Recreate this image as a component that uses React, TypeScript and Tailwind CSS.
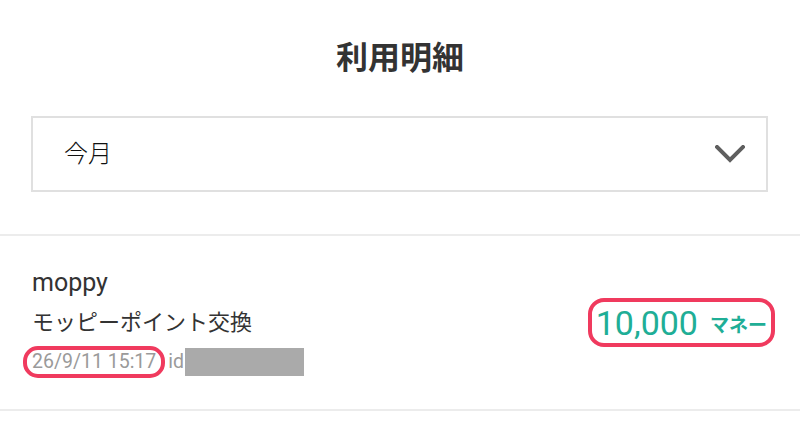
function ChevronDown(): JSX.Element {
  return (
    <svg width="30" height="18" viewBox="0 0 30 18" fill="none">
      <path
        d="M2 2L15 15L28 2"
        stroke="#5f5f5f"
        strokeWidth="4"
        strokeLinecap="square"
      />
    </svg>
  );
}

function App(): JSX.Element {
  return (
    <div
      className="w-full min-h-screen bg-white"
      style={{ fontFamily: 'Roboto, "Noto Sans CJK JP", sans-serif' }}
    >
      <header className="pt-[38px] flex justify-center">
        <h1 className="text-[32px] leading-[40px] font-bold text-[#333333]">
          利用明細
        </h1>
      </header>

      <div className="mt-[38px] ml-[31px] mr-[32px] h-[76px] border-2 border-[#e0e0e0] flex items-center justify-between pl-[31px] pr-[21px]">
        <span className="text-[24px] leading-[30px] font-light text-[#111111]">今月</span>
        <ChevronDown />
      </div>

      <div className="mt-[42px] h-[2px] bg-[#ececec]" />

      <div className="h-[173px] flex items-center justify-between pl-[32px] pr-[25px]">
        <div className="flex flex-col">
          <div className="text-[25px] leading-[30px] text-[#333333]">moppy</div>
          <div className="mt-[10px] text-[22px] leading-[30px] text-[#333333]">
            モッピーポイント交換
          </div>
          <div className="mt-[8px] flex items-center">
            <span className="-ml-[9px] h-[32px] px-[5px] flex items-center border-4 border-[#f03a5e] rounded-[15px] text-[19.5px] text-[#9a9a9a]">
              26/9/11 15:17
            </span>
            <span className="ml-[3px] text-[19.5px] text-[#9a9a9a]">id</span>
            <span className="ml-[1px] w-[119px] h-[28px] bg-[#aaaaaa]" />
          </div>
        </div>

        <div className="h-[49px] flex items-center border-4 border-[#f03a5e] rounded-[16px] pl-[4px] pr-[4px]">
          <span className="text-[34px] leading-[40px] text-[#1fae96]">
            10,000
          </span>
          <span className="ml-[12px] mt-[6px] text-[19px] leading-[24px] font-bold text-[#1fae96]">
            マネー
          </span>
        </div>
      </div>

      <div className="h-[2px] bg-[#ececec]" />
    </div>
  );
}

export default App;
